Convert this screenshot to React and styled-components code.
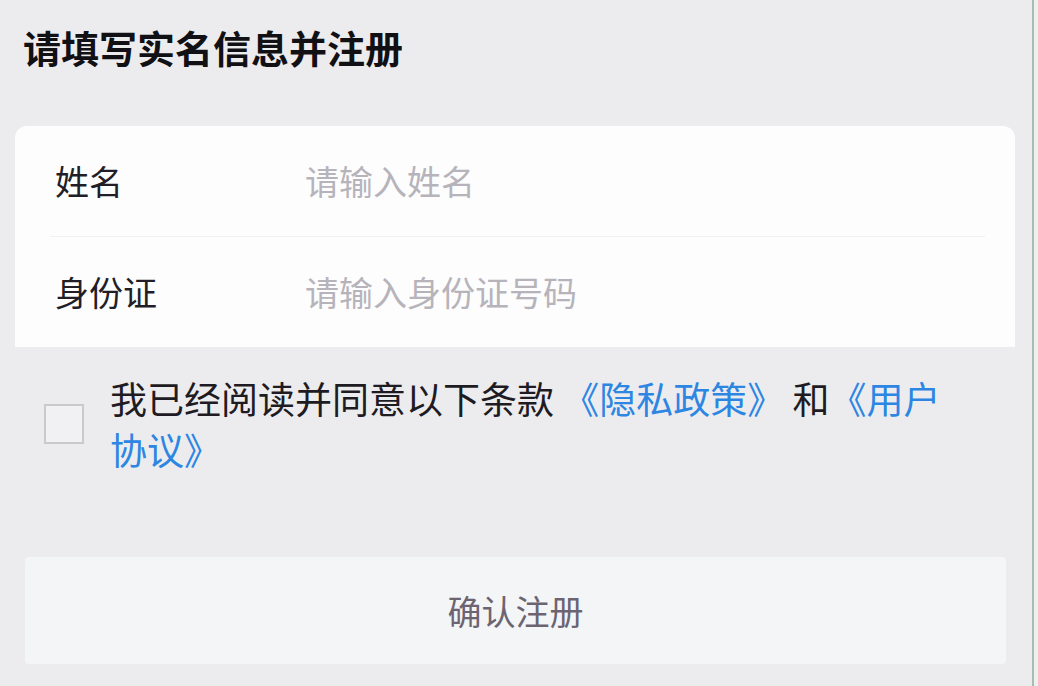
import React from "react";
import styled, { createGlobalStyle } from "styled-components";

const GlobalStyle = createGlobalStyle`
  html, body {
    margin: 0;
    padding: 0;
    background: #ececef;
  }
  body {
    font-family: "Noto Sans CJK SC", "Noto Sans", sans-serif;
  }
  * { box-sizing: border-box; }
`;

const Screen = styled.div`
  display: flex;
  width: 1038px;
  height: 686px;
  overflow: hidden;
  background: #ececef;
`;

const Main = styled.div`
  flex: 0 0 1032px;
  display: flex;
  flex-direction: column;
  padding-top: 19px;
`;

const Edge = styled.div`
  flex: 1;
  border-left: 2px solid #a8bcb2;
  background: #eef0ef;
`;

const Title = styled.h1`
  margin: 0 0 0 23px;
  font-size: 38px;
  line-height: 56px;
  font-weight: 700;
  color: #111014;
`;

const Card = styled.div`
  margin: 51px 17px 0 15px;
  background: #fdfdfe;
  border-radius: 12px 12px 0 0;
  display: flex;
  flex-direction: column;
`;

const Row = styled.div`
  display: flex;
  align-items: center;
  height: 110px;
  padding-left: 40px;
`;

const Divider = styled.div`
  height: 1px;
  margin: 0 30px 0 35px;
  background: #f1f1f4;
`;

const Label = styled.span`
  flex: 0 0 250px;
  font-size: 34px;
  line-height: 40px;
  color: #221e27;
`;

const Input = styled.input`
  flex: 1;
  border: none;
  outline: none;
  background: transparent;
  padding: 0;
  font-family: inherit;
  font-size: 34px;
  line-height: 40px;
  color: #221e27;
  &::placeholder {
    color: #b6b4ba;
  }
`;

const Agreement = styled.div`
  display: flex;
  align-items: center;
  margin-top: 26px;
  padding: 0 70px 0 44px;
  gap: 26px;
`;

const Check = styled.span`
  flex: 0 0 40px;
  width: 40px;
  height: 40px;
  border: 2px solid #c9c9cc;
  background: #f1f1f3;
`;

const AgreeText = styled.p`
  margin: 0;
  font-size: 37px;
  line-height: 51px;
  color: #1e1b22;
`;

const Link = styled.a`
  color: #2d86e2;
  text-decoration: none;
`;

const Button = styled.button`
  margin: 82px 26px 0 25px;
  height: 107px;
  border: none;
  border-radius: 4px;
  background: #f4f5f7;
  font-family: inherit;
  font-size: 34px;
  color: #6c6571;
  cursor: pointer;
`;

export default function App() {
  return (
    <>
      <GlobalStyle />
      <Screen>
        <Main>
          <Title>请填写实名信息并注册</Title>
          <Card>
            <Row>
              <Label>姓名</Label>
              <Input placeholder="请输入姓名" />
            </Row>
            <Divider />
            <Row>
              <Label>身份证</Label>
              <Input placeholder="请输入身份证号码" />
            </Row>
          </Card>
          <Agreement>
            <Check />
            <AgreeText>
              我已经阅读并同意以下条款 <Link>《隐私政策》</Link> 和<Link>《用户协议》</Link>
            </AgreeText>
          </Agreement>
          <Button>确认注册</Button>
        </Main>
        <Edge />
      </Screen>
    </>
  );
}
